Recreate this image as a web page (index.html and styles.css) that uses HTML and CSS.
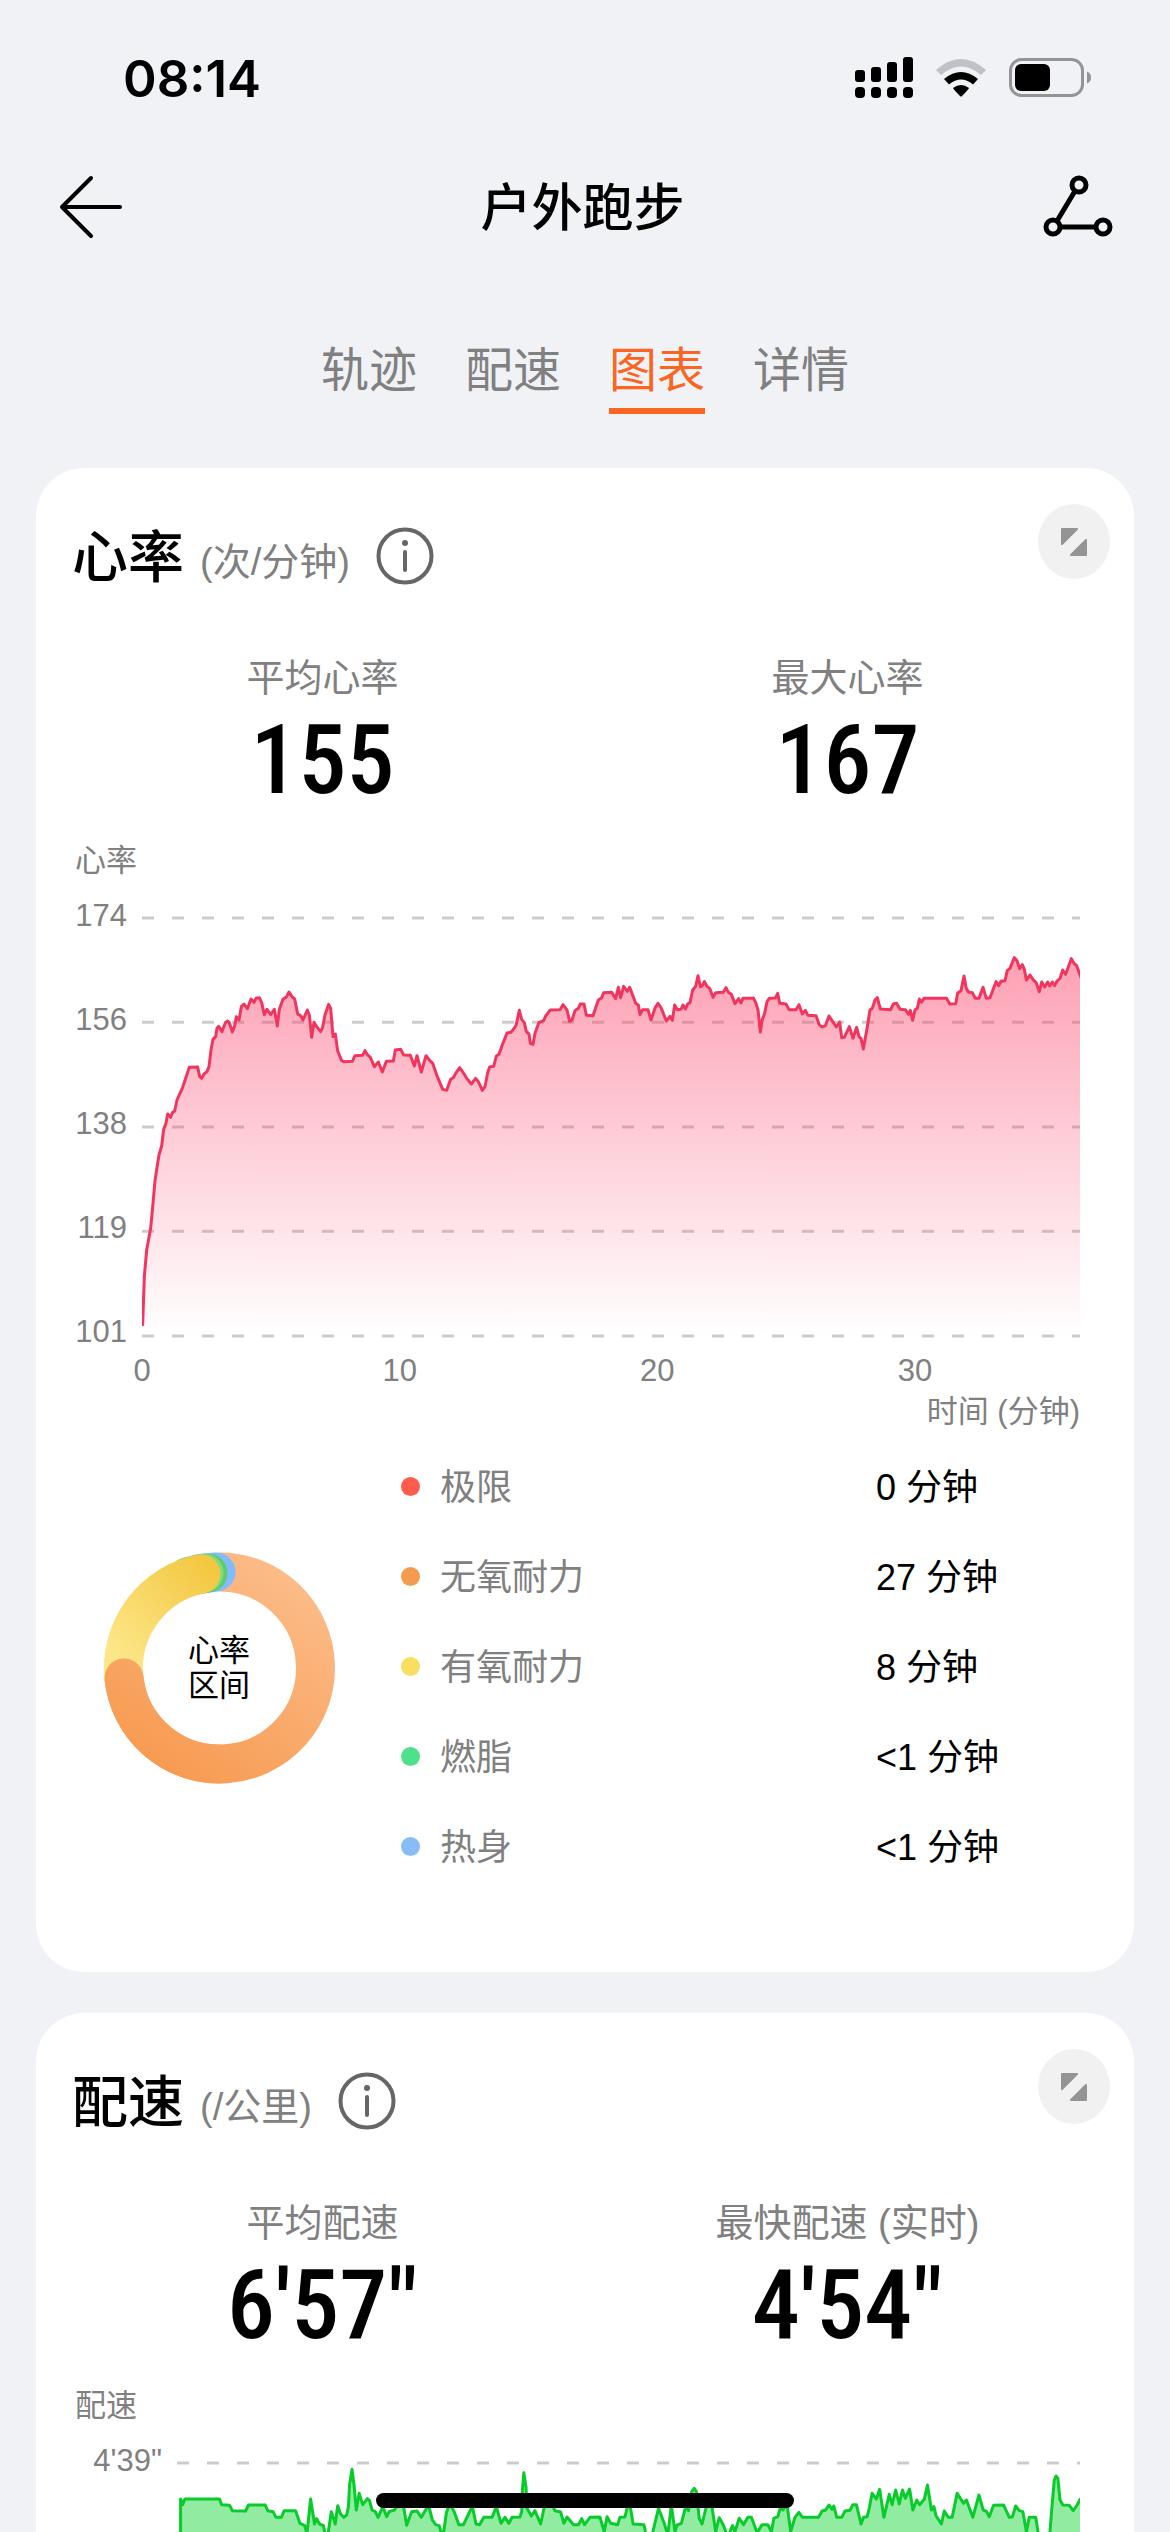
FILE: index.html
```html
<!DOCTYPE html>
<html lang="zh-CN">
<head>
    <meta charset="UTF-8">
    <meta name="viewport" content="width=device-width, initial-scale=1.0">
    <title>户外跑步</title>
    <link rel="stylesheet" href="styles.css">
</head>
<body>
    <div class="screen">
        <div class="status-bar">
            <span class="time">08:14</span>
            <div class="status-icons">
                <svg class="signal" width="58" height="42" viewBox="0 0 58 42">
                    <rect x="0" y="13" width="10" height="12" rx="3"/>
                    <rect x="16" y="10" width="10" height="15" rx="3"/>
                    <rect x="32" y="5" width="10" height="20" rx="3"/>
                    <rect x="48" y="0" width="10" height="25" rx="3"/>
                    <rect x="0" y="30" width="10" height="11" rx="4"/>
                    <rect x="16" y="30" width="10" height="11" rx="4"/>
                    <rect x="32" y="30" width="10" height="11" rx="4"/>
                    <rect x="48" y="30" width="10" height="11" rx="4"/>
                </svg>
                <svg class="wifi" width="52" height="38" viewBox="0 0 52 38">
                    <path d="M1 11Q26 -11 51 11L46 16Q26 -1 6 16Z" fill="#c1c2c5"/>
                    <path d="M9 20Q26 6 43 20L38 25.500Q26 15.500 14 25.500Z"/>
                    <path d="M18 29Q26 23 34 29Q33 31 27 37Q26 38 25 37Q19 31 18 29Z"/>
                </svg>
                <svg class="battery" width="83" height="40" viewBox="0 0 83 40">
                    <rect x="1.500" y="1.500" width="72" height="36" rx="11" fill="none" stroke="#939496" stroke-width="3"/>
                    <rect x="6" y="6" width="35" height="27" rx="6"/>
                    <path d="M78 13.500Q82 15 82 19.500Q82 24 78 25.500Z" fill="#939496"/>
                </svg>
            </div>
        </div>

        <header class="header">
            <button type="button" class="icon-btn" aria-label="返回">
                <svg width="64" height="66" viewBox="0 0 64 66" fill="none" stroke="#000" stroke-width="4" stroke-linecap="round" stroke-linejoin="round">
                    <path d="M33 4L4 33L33 62M4 33H62"/>
                </svg>
            </button>
            <h1>户外跑步</h1>
            <button type="button" class="icon-btn" aria-label="分享">
                <svg width="70" height="64" viewBox="0 0 70 64" fill="none" stroke="#000" stroke-width="5">
                    <circle cx="36" cy="10" r="7"/>
                    <circle cx="10" cy="52" r="7"/>
                    <circle cx="60" cy="52" r="7"/>
                    <path d="M32 16L14 46M17 52H53"/>
                </svg>
            </button>
        </header>

        <nav class="tabs">
            <a href="#track">轨迹</a>
            <a href="#pace">配速</a>
            <a href="#charts" class="active">图表</a>
            <a href="#detail">详情</a>
        </nav>

        <main id="charts">
            <!-- Heart rate -->
            <section class="card">
                <div class="card-head">
                    <h2>心率</h2>
                    <span class="unit">(次/分钟)</span>
                    <button type="button" class="info-btn" aria-label="心率说明">
                        <svg width="58" height="58" viewBox="0 0 58 58">
                            <circle cx="29" cy="29" r="26.500" fill="none" stroke="#666" stroke-width="4"/>
                            <circle cx="29" cy="16" r="3" fill="#666"/>
                            <path d="M29 25V43" stroke="#666" stroke-width="4" stroke-linecap="round"/>
                        </svg>
                    </button>
                    <button type="button" class="expand-btn" aria-label="展开">
                        <svg width="26" height="28" viewBox="0 0 26 28" fill="#949494" stroke="#949494" stroke-width="2" stroke-linejoin="round">
                            <path d="M1 1H16L1 16ZM25 12V27H10Z"/>
                        </svg>
                    </button>
                </div>
                <dl class="stats">
                    <div>
                        <dt>平均心率</dt>
                        <dd>155</dd>
                    </div>
                    <div>
                        <dt>最大心率</dt>
                        <dd>167</dd>
                    </div>
                </dl>
                <p class="axis-title">心率</p>
                <div class="chart">
                    <ul class="y-axis">
                        <li>174</li>
                        <li>156</li>
                        <li>138</li>
                        <li>119</li>
                        <li>101</li>
                    </ul>
                    <svg class="plot" viewBox="246 78 2814 1266" preserveAspectRatio="none">
                        <defs>
                            <linearGradient id="hrFill" gradientUnits="userSpaceOnUse" x1="0" y1="200" x2="0" y2="1338">
                                <stop offset="0" stop-color="#fb3a63" stop-opacity=".48"/>
                                <stop offset="1" stop-color="#fb3a63" stop-opacity="0"/>
                            </linearGradient>
                        </defs>
                        <path class="grid-line" d="M246 84H3060M246 397H3060M246 711H3060M246 1024H3060M246 1338H3060"/>
                        <!-- the sides and the bottom run outside the viewBox, so only the curve is stroked -->
                        <path class="line hr-line" fill="url(#hrFill)" d="M238 1360V1304H248L253 1160 260 1080 272 1015 279 940 285 872 293 820 297 795 305 768 311 718 318 700 323 672 332 682 337 668 344 663 351 630 368 592 388 532 413 531 419 560 425 565 432 552 441 545 447 530 453 480 459 448 467 440 471 415 476 409 486 425 496 398 503 393 508 398 517 426 524 408 529 380 537 390 544 350 552 342 562 356 573 327 582 337 588 325 598 323 605 338 613 374 621 358 632 374 643 358 652 408 658 358 669 328 680 320 687 306 696 320 704 327 713 372 723 378 729 390 742 360 748 375 755 442 762 397 770 410 782 425 788 412 795 375 806 343 812 355 819 440 826 432 833 483 845 512 852 515 877 514 885 497 908 496 915 482 922 494 931 502 943 530 955 516 967 546 979 514 1000 513 1006 480 1022 478 1031 495 1051 496 1063 528 1071 497 1084 546 1098 497 1108 510 1118 520 1132 560 1148 598 1160 601 1172 568 1180 563 1187 550 1199 533 1211 550 1220 565 1234 582 1247 565 1255 575 1267 601 1275 590 1283 548 1289 531 1301 529 1309 498 1317 493 1325 470 1341 429 1353 427 1368 407 1378 361 1385 388 1393 398 1399 425 1407 432 1411 460 1419 463 1425 430 1437 397 1451 392 1457 378 1471 360 1500 359 1509 344 1521 360 1529 394 1536 390 1545 362 1555 355 1561 342 1572 342 1579 376 1599 377 1615 330 1625 323 1631 308 1655 307 1667 326 1675 292 1682 323 1691 289 1702 304 1709 292 1717 313 1727 340 1735 345 1740 374 1748 359 1764 359 1773 390 1786 352 1794 340 1803 353 1819 393 1830 379 1837 391 1844 345 1852 359 1863 358 1869 345 1876 357 1883 342 1890 338 1898 300 1907 289 1914 257 1921 290 1926 288 1933 275 1941 289 1949 295 1959 322 1967 308 1990 307 1998 293 2005 307 2014 313 2025 341 2036 326 2043 339 2049 325 2081 325 2088 340 2094 360 2101 426 2107 388 2114 370 2121 335 2128 325 2146 324 2153 310 2159 340 2178 342 2187 359 2208 359 2217 344 2227 372 2236 361 2244 376 2268 377 2278 405 2287 411 2296 407 2307 378 2318 395 2329 411 2339 396 2345 443 2353 442 2368 410 2379 445 2390 412 2397 440 2403 445 2410 477 2422 410 2430 360 2437 355 2445 330 2452 323 2461 357 2492 359 2500 342 2510 340 2520 358 2536 359 2546 373 2551 361 2558 391 2565 360 2572 355 2578 327 2584 337 2592 325 2660 325 2669 342 2687 341 2693 309 2703 302 2712 258 2718 292 2725 306 2737 308 2746 325 2757 325 2769 292 2779 325 2790 323 2808 275 2816 287 2823 274 2835 272 2842 241 2850 235 2863 203 2871 212 2879 236 2887 224 2893 238 2899 270 2910 255 2920 270 2928 277 2938 305 2945 276 2954 291 2963 276 2969 288 2977 276 2984 287 2991 273 3000 265 3008 240 3017 253 3034 206 3042 220 3050 227 3060 255 3070 280V1360"/>
                    </svg>
                </div>
                <ul class="x-axis">
                    <li>0</li>
                    <li>10</li>
                    <li>20</li>
                    <li>30</li>
                </ul>
                <p class="x-title">时间 (分钟)</p>

                <div class="zones">
                    <div class="donut">
                        <svg width="232" height="232" viewBox="0 0 232 232" fill="none" stroke-width="39" stroke-linecap="round">
                            <defs>
                                <linearGradient id="orange" gradientUnits="userSpaceOnUse" x1="150" y1="0" x2="20" y2="190">
                                    <stop offset="0" stop-color="#fcbb87"/>
                                    <stop offset="1" stop-color="#f79b52"/>
                                </linearGradient>
                                <linearGradient id="yellow" gradientUnits="userSpaceOnUse" x1="20" y1="110" x2="115" y2="20">
                                    <stop offset="0" stop-color="#fde689"/>
                                    <stop offset="1" stop-color="#f3c740"/>
                                </linearGradient>
                            </defs>
                            <path d="M116 20A96 96 0 1 1 21 126" stroke="url(#orange)" stroke-linecap="butt"/>
                            <path d="M95 22L113 20" stroke="#80bcff"/>
                            <path d="M88 24L105 21" stroke="#5fcc6b"/>
                            <path d="M84 25L101 21" stroke="#7fdc83"/>
                            <path d="M21 126A96 96 0 0 1 98 22" stroke="url(#yellow)"/>
                            <path d="M116 212A96 96 0 0 1 21 126" stroke="url(#orange)"/>
                        </svg>
                        <p>心率<br>区间</p>
                    </div>
                    <table class="legend">
                        <tr>
                            <th scope="row"><i class="dot limit"></i>极限</th>
                            <td>0 分钟</td>
                        </tr>
                        <tr>
                            <th scope="row"><i class="dot anaerobic"></i>无氧耐力</th>
                            <td>27 分钟</td>
                        </tr>
                        <tr>
                            <th scope="row"><i class="dot aerobic"></i>有氧耐力</th>
                            <td>8 分钟</td>
                        </tr>
                        <tr>
                            <th scope="row"><i class="dot fat"></i>燃脂</th>
                            <td>&lt;1 分钟</td>
                        </tr>
                        <tr>
                            <th scope="row"><i class="dot warmup"></i>热身</th>
                            <td>&lt;1 分钟</td>
                        </tr>
                    </table>
                </div>
            </section>

            <!-- Pace -->
            <section class="card" id="pace">
                <div class="card-head">
                    <h2>配速</h2>
                    <span class="unit">(/公里)</span>
                    <button type="button" class="info-btn" aria-label="配速说明">
                        <svg width="58" height="58" viewBox="0 0 58 58">
                            <circle cx="29" cy="29" r="26.500" fill="none" stroke="#666" stroke-width="4"/>
                            <circle cx="29" cy="16" r="3" fill="#666"/>
                            <path d="M29 25V43" stroke="#666" stroke-width="4" stroke-linecap="round"/>
                        </svg>
                    </button>
                    <button type="button" class="expand-btn" aria-label="展开">
                        <svg width="26" height="28" viewBox="0 0 26 28" fill="#949494" stroke="#949494" stroke-width="2" stroke-linejoin="round">
                            <path d="M1 1H16L1 16ZM25 12V27H10Z"/>
                        </svg>
                    </button>
                </div>
                <dl class="stats">
                    <div>
                        <dt>平均配速</dt>
                        <dd>6'57"</dd>
                    </div>
                    <div>
                        <dt>最快配速 (实时)</dt>
                        <dd>4'54"</dd>
                    </div>
                </dl>
                <p class="axis-title">配速</p>
                <div class="chart">
                    <ul class="y-axis y-axis-wide">
                        <li>4'39"</li>
                    </ul>
                    <svg class="plot" viewBox="328 243 2528 1266" preserveAspectRatio="none">
                        <path class="grid-line" d="M328 249H2856"/>
                        <path class="line pace-line" d="M338 1520V357L344 374 350 357 447 357 453 374 475 376 483 392 520 393 528 375 575 375 582 392 597 395 605 412 620 412 628 392 660 392 672 430 685 436 692 460 702 357 713 432 719 416 727 432 738 437 745 475 751 460 760 395 771 432 778 377 786 402 795 412 803 405 808 380 811 315 818 268 824 320 830 390 838 340 848 374 861 356 867 362 874 390 883 395 891 412 904 380 915 410 922 395 937 390 950 368 962 378 971 436 985 395 1000 393 1012 412 1032 375 1043 420 1052 434 1062 437 1072 475 1082 400 1091 370 1104 395 1117 434 1130 434 1145 400 1155 380 1165 432 1175 434 1187 412 1210 412 1222 380 1235 430 1246 412 1257 430 1266 412 1288 411 1293 395 1295 330 1299 278 1305 320 1308 385 1320 408 1330 392 1346 432 1358 372 1372 360 1386 392 1402 396 1411 430 1420 411 1438 434 1452 434 1461 416 1469 434 1484 412 1512 411 1524 455 1532 410 1542 430 1562 434 1568 412 1582 411 1590 375 1597 380 1605 432 1635 434 1645 480 1660 456 1676 385 1692 430 1702 465 1712 375 1722 455 1728 435 1740 430 1752 380 1760 392 1769 335 1776 325 1782 335 1790 415 1798 432 1812 370 1825 375 1836 455 1846 413 1857 434 1870 470 1883 437 1890 455 1902 415 1914 434 1926 412 1936 412 1952 458 1966 434 1982 434 1992 455 1999 415 2010 410 2018 380 2024 390 2036 375 2046 455 2058 412 2069 397 2079 412 2124 412 2134 393 2144 390 2153 375 2162 388 2167 378 2175 412 2189 412 2198 393 2212 391 2220 374 2230 374 2243 432 2250 412 2260 410 2266 385 2274 340 2286 357 2295 328 2307 412 2322 343 2330 374 2340 330 2350 372 2359 330 2367 355 2379 327 2388 390 2399 360 2407 374 2420 358 2429 315 2440 390 2447 380 2453 408 2468 432 2476 393 2487 412 2498 412 2512 340 2530 370 2538 360 2556 412 2573 345 2585 390 2594 394 2602 410 2614 376 2642 375 2658 412 2667 410 2676 378 2686 392 2696 395 2706 455 2714 412 2732 412 2742 480 2770 480 2776 400 2784 300 2789 288 2794 295 2800 360 2808 375 2826 376 2837 392 2848 375 2856 358 2870 358V1520"/>
                    </svg>
                </div>
            </section>
        </main>
        <div class="home-indicator"></div>
    </div>
</body>
</html>
```
FILE: styles.css
```css
/* Global Styles */
* {
    box-sizing: border-box;
    margin: 0;
    padding: 0;
}

body {
    background: #f1f2f6;
    color: #000;
    font-family: "Liberation Sans", "Noto Sans CJK SC", sans-serif;
}

button {
    border: none;
    background: none;
    cursor: pointer;
}

svg {
    display: block;
}

ul {
    list-style: none;
}

.screen {
    height: 100vh;
    overflow: hidden;
}

/* Status bar */
.status-bar {
    display: flex;
    justify-content: space-between;
    align-items: center;
    height: 150px;
    padding: 6px 78px 0 123px;
}

.time {
    font-family: "Inter", sans-serif;
    font-size: 51px;
    font-weight: 600;
}

.status-icons {
    display: flex;
    align-items: center;
    gap: 22px;
}

/* Header */
.header {
    display: flex;
    justify-content: space-between;
    align-items: center;
    height: 114px;
    padding: 0 57px 0 58px;
}

.header h1 {
    padding-top: 4px;
    font-size: 51px;
    font-weight: 500;
    line-height: 72px;
}

/* Tabs */
.tabs {
    display: flex;
    justify-content: center;
    gap: 48px;
    margin: 71px 0 54px;
}

.tabs a {
    padding-bottom: 1px;
    border-bottom: 6px solid transparent;
    color: #808080;
    font-size: 48px;
    line-height: 72px;
    text-decoration: none;
}

.tabs .active {
    border-color: #fb6522;
    color: #fb6522;
}

/* Cards */
.card {
    margin: 0 36px 41px;
    padding: 36px 24px 79px;
    border-radius: 48px;
    background: #fff;
}

.card-head {
    display: flex;
    align-items: center;
    height: 88px;
    padding: 16px 0 0 12px;
}

.card-head h2 {
    padding-top: 4px;
    font-size: 56px;
    font-weight: 500;
    line-height: 72px;
}

.unit {
    margin: 12px 26px 0 16px;
    color: #808080;
    font-size: 38px;
    line-height: 54px;
}

.expand-btn {
    display: flex;
    justify-content: center;
    align-items: center;
    align-self: flex-start;
    width: 72px;
    height: 75px;
    margin: -16px 0 0 auto;
    border-radius: 50%;
    background: #f1f1f1;
}

.stats {
    display: grid;
    grid-template-columns: 1fr 1fr;
    margin-top: 59px;
    text-align: center;
}

.stats dt {
    color: #808080;
    font-size: 38px;
    line-height: 54px;
}

.stats dd {
    font-family: "Roboto Condensed", "Liberation Sans Narrow", sans-serif;
    font-size: 96px;
    font-weight: 500;
    line-height: 110px;
}

/* Charts */
.axis-title,
.x-title {
    color: #808080;
    font-size: 31px;
    line-height: 42px;
}

.axis-title {
    margin: 25px 0 15px 15px;
}

.x-title {
    margin: 1px 30px 0 0;
    text-align: right;
}

.chart {
    display: flex;
    height: 454px;
    padding-right: 30px;
}

.y-axis {
    display: flex;
    flex-direction: column;
    justify-content: space-between;
    width: 67px;
    margin-right: 15px;
}

.y-axis-wide {
    width: 102px;
}

.y-axis li,
.x-axis li {
    color: #808080;
    font-size: 31px;
    line-height: 38px;
    text-align: right;
}

.plot {
    flex: 1;
    min-width: 0;
    height: 422px;
    margin-top: 19px;
}

.grid-line {
    fill: none;
    stroke: rgba(0, 0, 0, 0.2);
    stroke-width: 3px;
    stroke-dasharray: 12px 18px;
    vector-effect: non-scaling-stroke;
}

.line {
    stroke-width: 3px;
    stroke-linejoin: round;
    vector-effect: non-scaling-stroke;
}

.hr-line {
    stroke: #f0365f;
}

.pace-line {
    fill: #91eca1;
    stroke: #09cb2b;
}

.x-axis {
    display: flex;
    justify-content: space-between;
    margin: 1px 175px 0 62px;
}

.x-axis li {
    width: 40px;
    text-align: center;
}

/* Heart rate zones */
.zones {
    display: flex;
    align-items: center;
    gap: 66px;
    margin-top: 10px;
    padding-left: 43px;
}

.donut {
    display: grid;
    place-items: center;
}

.donut > * {
    grid-area: 1 / 1;
}

.donut p {
    font-size: 31px;
    line-height: 35px;
}

.legend {
    flex: 1;
    border-collapse: collapse;
    font-size: 36px;
    line-height: 54px;
    text-align: left;
}

.legend tr {
    height: 90px;
}

.legend th {
    width: 67%;
    color: #808080;
    font-weight: normal;
}

.dot {
    display: inline-block;
    width: 19px;
    height: 19px;
    margin-right: 20px;
    border-radius: 50%;
    vertical-align: 4px;
}

.limit {
    background: #ff5c4d;
}

.anaerobic {
    background: #f39c4f;
}

.aerobic {
    background: #f9de5f;
}

.fat {
    background: #4ce18a;
}

.warmup {
    background: #87bcf9;
}

/* Home indicator, floats above the page */
.home-indicator {
    position: fixed;
    bottom: 24px;
    left: 50%;
    width: 418px;
    height: 15px;
    margin-left: -209px;
    border-radius: 8px;
    background: #000;
}
```
